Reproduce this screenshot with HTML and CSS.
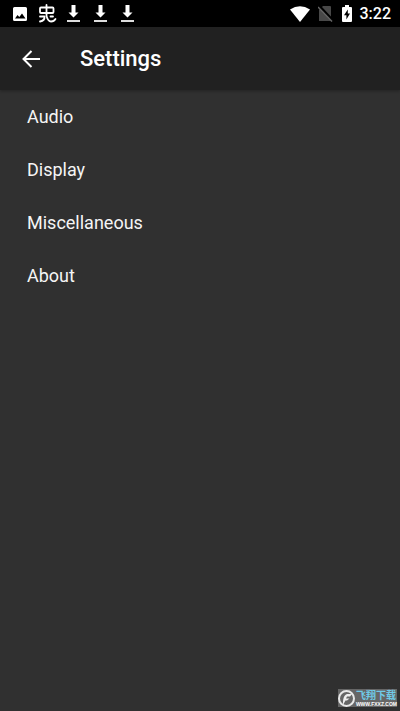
FILE: index.html
```html
<!DOCTYPE html>
<html lang="en">
<head>
<meta charset="utf-8">
<meta name="viewport" content="width=device-width, initial-scale=1">
<title>Settings</title>
<link rel="stylesheet" href="styles.css">
</head>
<body>
<div class="status">
  <div class="notifications">
    <svg width="14" height="14" viewBox="0 0 14 14"><path fill="#fff" fill-rule="evenodd" d="M1.500 0h11A1.500 1.500 0 0 1 14 1.500v11a1.500 1.500 0 0 1-1.500 1.500h-11A1.500 1.500 0 0 1 0 12.500v-11A1.500 1.500 0 0 1 1.500 0zM2 11.500h10.500L9 6.500l-2.700 3.600L4.500 8z"/></svg>
    <svg class="clone" width="19" height="19" viewBox="0 0 19 19"><g fill="none" stroke="#fff" stroke-width="1.800" stroke-linecap="round" stroke-linejoin="round"><path d="M8.500 1v11M3 3.500h11.500q1 0 1 1v3.500q0 1-1 1h-11.500q-1 0-1-1v-3.500q0-1 1-1zM2 12.500h4.500Q7 16.500 2 17.500M8.500 12Q10 17.500 13 17.500T17.500 15M12.500 12.500h2.500"/></g></svg>
    <svg width="13" height="18" viewBox="0 0 13 18"><path fill="#fff" d="M4.500 0h4v7.500h3l-5 5-5-5h3z"/><path fill="#ddd" d="M0 15h13v2H0z"/></svg>
    <svg width="13" height="18" viewBox="0 0 13 18"><path fill="#fff" d="M4.500 0h4v7.500h3l-5 5-5-5h3z"/><path fill="#ddd" d="M0 15h13v2H0z"/></svg>
    <svg width="13" height="18" viewBox="0 0 13 18"><path fill="#fff" d="M4.500 0h4v7.500h3l-5 5-5-5h3z"/><path fill="#ddd" d="M0 15h13v2H0z"/></svg>
  </div>
  <div class="system">
    <svg width="20" height="16" viewBox="0 0 20 16"><path fill="#fff" d="M0 3.500Q10-3 20 3.500L10 16z"/></svg>
    <svg width="16" height="16" viewBox="0 0 16 16"><path fill="#484848" d="M5 0h7q1 0 1 1v14H1V4z"/><path stroke="#000" stroke-width="3" d="M1 0l14 15"/><path stroke="#666" stroke-width="1.500" d="M0 1l14 14.500"/></svg>
    <svg width="10" height="17" viewBox="0 0 10 17"><path fill="#fff" d="M3 0h4v2h2q1 0 1 1v13q0 1-1 1H1q-1 0-1-1V3q0-1 1-1h2z"/><path d="M5.800 4.500L2 10.200h2.400v4.300L8 8.500H5.800z"/></svg>
    <time>3:22</time>
  </div>
</div>
<header class="bar">
  <button class="back" type="button" aria-label="Back"><svg width="18" height="18" viewBox="0 0 18 18"><path fill="none" stroke="#fff" stroke-width="2" d="M18 9H2M9.500 1L1.500 9l8 8"/></svg></button>
  <h1>Settings</h1>
</header>
<main>
  <nav class="menu">
    <a href="#audio">Audio</a>
    <a href="#display">Display</a>
    <a href="#misc">Miscellaneous</a>
    <a href="#about">About</a>
  </nav>
</main>
<footer>
  <div class="stamp">
    <svg width="17" height="17" viewBox="0 0 17 17"><circle cx="8.500" cy="8.500" r="7.500" fill="#666" stroke="#e8e8e8" stroke-width="2"/><path fill="#eee" d="M5 15c0-5 0-9 4-11h5l-2 2.500H9L8 8.500h3.500L9 10.500H7.500z"/></svg>
    <div class="stamp-text"><span class="stamp-name" lang="zh">飞翔下载</span><span class="stamp-url">WWW.FXXZ.COM</span></div>
  </div>
</footer>
</body>
</html>
```
FILE: styles.css
```css
* { box-sizing: border-box; }
body {
  margin: 0;
  min-height: 100vh;
  display: flex;
  flex-direction: column;
  background: #303030;
  color: #fff;
  font-family: Roboto, "Noto Sans CJK SC", sans-serif;
}
svg { display: block; flex: none; }
.status {
  height: 27px;
  padding: 0 9px 0 13px;
  display: flex;
  align-items: center;
  justify-content: space-between;
  background: #000;
}
.notifications { display: flex; align-items: center; gap: 14px; }
.clone { margin: 0 -4px 0 -3px; }
.system { display: flex; align-items: center; gap: 8px; }
.system time { font-size: 16px; font-weight: 500; line-height: 27px; }
.bar {
  height: 63px;
  padding: 0 22px;
  display: flex;
  align-items: center;
  gap: 40px;
  background: #212121;
  box-shadow: 0 1px 3px rgba(0, 0, 0, .3);
}
.back { padding: 0; border: 0; background: none; }
h1 { margin: 0; font-size: 22px; font-weight: 500; line-height: 28px; }
main { flex: 1; }
.menu { display: grid; }
.menu a {
  padding: 0 27px;
  line-height: 53px;
  font-size: 18px;
  color: #f5f5f5;
  text-decoration: none;
}
footer { display: flex; justify-content: flex-end; padding: 0 3px 4px; }
.stamp {
  display: flex;
  align-items: center;
  gap: 1px;
  height: 18px;
  background: #666;
}
.stamp-text { display: flex; flex-direction: column; }
.stamp-name { font-size: 10px; line-height: 11px; font-weight: 700; color: #6fcbe8; }
.stamp-url { font: 700 5px/6px "Liberation Sans", sans-serif; color: #fff; }
```
